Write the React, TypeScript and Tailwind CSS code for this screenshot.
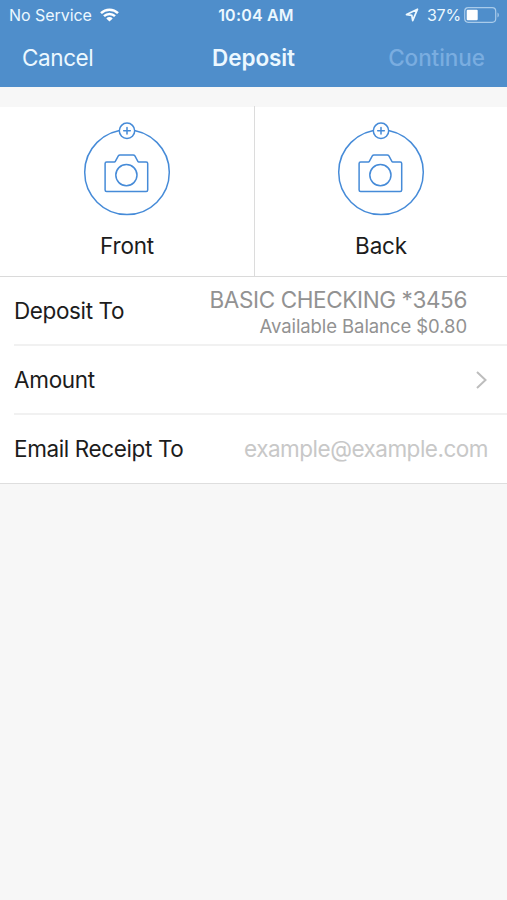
function Camera() {
  return (
    <svg width="90" height="96" viewBox="0 0 90 96" fill="none" stroke="#468bd8" strokeWidth="1.5" strokeLinejoin="round" strokeLinecap="round">
      <circle cx="45" cy="50.3" r="42.3" />
      <circle cx="45" cy="8.8" r="7.7" fill="#fff" />
      <path d="M45 5.5v6.6M41.7 8.8h6.6" />
      <path d="M24.600 40.100h7.700l.9-.5 3.100-5.700c.4-.7.900-1 1.700-1h13.200c.8 0 1.300.3 1.700 1l3.100 5.700.9.5h7.300c1 0 1.500.6 1.500 1.500v26.300c0 .9-.6 1.500-1.500 1.500H24.600c-.9 0-1.500-.6-1.500-1.500V41.600c0-.9.6-1.500 1.500-1.500z" />
      <circle cx="44.4" cy="53.1" r="10.6" />
    </svg>
  );
}

function Photo({ label }: { label: string }) {
  return (
    <button className="flex flex-col items-center pt-[16px]">
      <Camera />
      <span className="mt-[14px] text-[22.5px] leading-7 tracking-[-0.2px] text-[#1c1c1c]">{label}</span>
    </button>
  );
}

export default function App() {
  return (
    <div className="flex h-[900px] w-[507px] flex-col overflow-hidden whitespace-nowrap bg-[#f7f7f7] font-['Inter',sans-serif]">
      <header className="h-[87px] shrink-0 bg-[#4f8ecb] text-[#ecf8ff]">
        <div className="grid h-[30px] grid-cols-3 items-center pl-[9px] pr-[6px] text-base">
          <div className="flex items-center gap-[8px]">
            <span className="tracking-[-0.05px]">No Service</span>
            <svg width="19" height="14" viewBox="0 0 19 14" fill="none" stroke="#fff" strokeWidth="2.5">
              <path d="M1 5.1a12.2 12.2 0 0 1 17 0M4 8.2a7.9 7.9 0 0 1 11 0" />
              <path d="M9.5 13.5 6.3 10.4a4.5 4.5 0 0 1 6.4 0z" fill="#fff" stroke="none" />
            </svg>
          </div>
          <span className="pl-[2px] text-center font-semibold tracking-[0.2px]">10:04 AM</span>
          <div className="flex items-center justify-end">
            <svg className="mr-[8px]" width="14" height="14" viewBox="0 0 14 14" fill="none" stroke="#ecf8ff" strokeWidth="1.7" strokeLinejoin="round">
              <path d="M12.500 1.200 1.500 6.600l5.300.7.9 5.400z" />
            </svg>
            <span className="tracking-[-0.2px]">37%</span>
            <svg className="ml-[3px]" width="37" height="16" viewBox="0 0 37 16" fill="none">
              <rect x=".7" y=".7" width="31" height="14.6" rx="3.5" stroke="#a9cbea" strokeWidth="1.2" />
              <rect x="2.7" y="2.7" width="11" height="10.6" rx="1" fill="#fff" />
              <path d="M33.5 5.500c1.800.7 1.800 4.300 0 5z" fill="#a9cbea" />
            </svg>
          </div>
        </div>
        <div className="grid h-[56px] grid-cols-3 items-center px-[22px] text-[22.5px]">
          <span className="tracking-[-0.4px]">Cancel</span>
          <span className="text-center font-semibold tracking-[-0.1px]">Deposit</span>
          <span className="text-right font-medium tracking-[-0.05px] text-[#7aade0]">Continue</span>
        </div>
      </header>
      <section className="mt-[20px] grid h-[170px] shrink-0 grid-cols-[255px_1fr] divide-x divide-[#dcdcdc] border-b border-[#dadada] bg-white">
        <div className="-mt-px grid"><Photo label="Front" /></div>
        <div className="-mt-px grid"><Photo label="Back" /></div>
      </section>
      <section className="h-[207px] shrink-0 border-b border-[#dedede] bg-white pl-[14px] text-[22.5px] tracking-[-0.38px] text-[#1c1c1c]">
        <div className="flex h-[69px] items-center justify-between border-b-2 border-[#f1f1f1] pr-[40px]">
          <span className="pt-px">Deposit To</span>
          <div className="flex flex-col items-end pt-[4px] text-[#929292]">
            <span className="leading-[26px]">BASIC CHECKING *3456</span>
            <span className="text-[18.5px] leading-[26px] tracking-[-0.08px]">Available Balance $0.80</span>
          </div>
        </div>
        <div className="flex h-[69px] items-center justify-between border-b-2 border-[#f1f1f1] pr-[20px]">
          <span className="tracking-[-0.3px]">Amount</span>
          <svg width="11" height="18" viewBox="0 0 11 18" fill="none" stroke="#bdbdbd" strokeWidth="2">
            <path d="m1 1 8.5 8L1 17" />
          </svg>
        </div>
        <div className="flex h-[68px] items-center justify-between pr-[19px]">
          <span>Email Receipt To</span>
          <span className="tracking-[-0.5px] text-[#c8c8c8]">example@example.com</span>
        </div>
      </section>
    </div>
  );
}
